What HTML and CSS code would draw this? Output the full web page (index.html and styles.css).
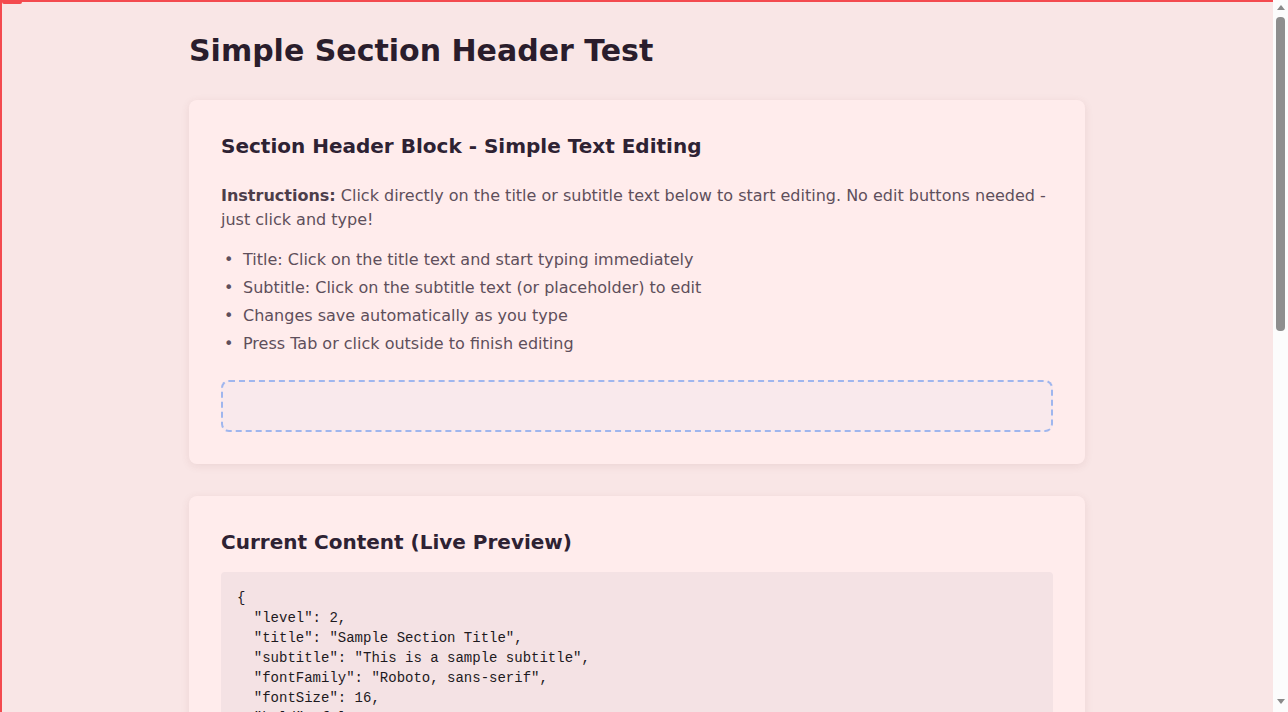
FILE: index.html
```html
<!DOCTYPE html>
<html lang="en">
<head>
<meta charset="utf-8">
<title>Simple Section Header Test</title>
<link rel="stylesheet" href="styles.css">
</head>
<body>
<div class="frame">
  <span class="corner-tab"></span>
  <main class="page">
    <h1 class="page-title">Simple Section Header Test</h1>

    <section class="card">
      <h2 class="card-title card-title--intro">Section Header Block - Simple Text Editing</h2>
      <p class="instructions"><strong>Instructions:</strong> Click directly on the title or subtitle text below to start editing. No edit buttons needed - just click and type!</p>
      <ul class="tips">
        <li>Title: Click on the title text and start typing immediately</li>
        <li>Subtitle: Click on the subtitle text (or placeholder) to edit</li>
        <li>Changes save automatically as you type</li>
        <li>Press Tab or click outside to finish editing</li>
      </ul>
      <div class="editor-zone"></div>
    </section>

    <section class="card">
      <h2 class="card-title">Current Content (Live Preview)</h2>
      <pre class="code">{
  "level": 2,
  "title": "Sample Section Title",
  "subtitle": "This is a sample subtitle",
  "fontFamily": "Roboto, sans-serif",
  "fontSize": 16,
  "bold": false,
  "italic": false,
  "underline": false,
  "color": "#000000",
  "alignment": "left"
}</pre>
    </section>
  </main>
</div>
<div class="scrollbar" aria-hidden="true">
  <span class="scroll-arrow scroll-arrow--up"></span>
  <span class="scroll-thumb"></span>
  <span class="scroll-arrow scroll-arrow--down"></span>
</div>
</body>
</html>
```

FILE: styles.css
```css
html, body {
  margin: 0;
  padding: 0;
}

body {
  background: #f9e6e6;
  font-family: "DejaVu Sans", sans-serif;
  color: #2e2233;
}

.frame {
  position: relative;
  margin-right: 15px;
  padding-right: 1px;
  border-top: 2px solid #f44a4f;
  border-left: 2px solid #f44a4f;
  min-height: 100vh;
}

.corner-tab {
  position: absolute;
  top: -2px;
  left: 0;
  width: 20px;
  height: 4px;
  background: #f44a4f;
  border-radius: 0 0 2px 2px;
}

.page {
  max-width: 896px;
  margin: 0 auto;
  padding: 29px 0 48px;
}

.page-title {
  margin: 0 0 29px;
  font-size: 30px;
  line-height: 40px;
  font-weight: 700;
  color: #2a1d2c;
}

.card {
  background: #ffecec;
  border-radius: 8px;
  box-shadow: 0 2px 8px rgba(120, 60, 60, 0.10);
  padding: 32px;
  margin-bottom: 32px;
}

.card-title {
  margin: 0 0 16px;
  font-size: 20px;
  line-height: 28px;
  font-weight: 700;
  color: #2e2233;
}

.card-title--intro {
  margin-bottom: 24px;
}

.instructions {
  margin: 0 0 16px;
  font-size: 16px;
  line-height: 24px;
  color: #5e4f5b;
}

.instructions strong {
  color: #4d3e4a;
}

.tips {
  list-style: none;
  margin: 0 0 24px;
  padding: 0;
  font-size: 16px;
  line-height: 24px;
  color: #5e4f5b;
}

.tips li {
  display: flex;
  margin-bottom: 4px;
}

.tips li::before {
  content: "\2022";
  flex: 0 0 19px;
  padding-left: 3px;
}

.tips li:last-child {
  margin-bottom: 0;
}

.editor-zone {
  height: 48px;
  border: 2px dashed #9fb6ee;
  border-radius: 8px;
  background: #f9e9ec;
}

.code {
  margin: 0;
  padding: 16px;
  background: #f4e2e4;
  border-radius: 4px;
  font-family: "Liberation Mono", monospace;
  font-size: 14px;
  line-height: 20px;
  color: #1e1a1e;
}

/* classic scrollbar drawn over the right edge */
.scrollbar {
  position: fixed;
  top: 0;
  right: 0;
  bottom: 0;
  width: 15px;
  background: #fcfcfc;
  display: flex;
  flex-direction: column;
  align-items: center;
}

.scroll-arrow {
  width: 0;
  height: 0;
  border-left: 4px solid transparent;
  border-right: 4px solid transparent;
}

.scroll-arrow--up {
  margin-top: 5px;
  border-bottom: 5px solid #8a8a8a;
}

.scroll-arrow--down {
  margin-top: auto;
  margin-bottom: 8px;
  border-top: 5px solid #8a8a8a;
}

.scroll-thumb {
  margin-top: 7px;
  width: 9px;
  height: 314px;
  border-radius: 4px;
  background: #8e8e8e;
}
```
